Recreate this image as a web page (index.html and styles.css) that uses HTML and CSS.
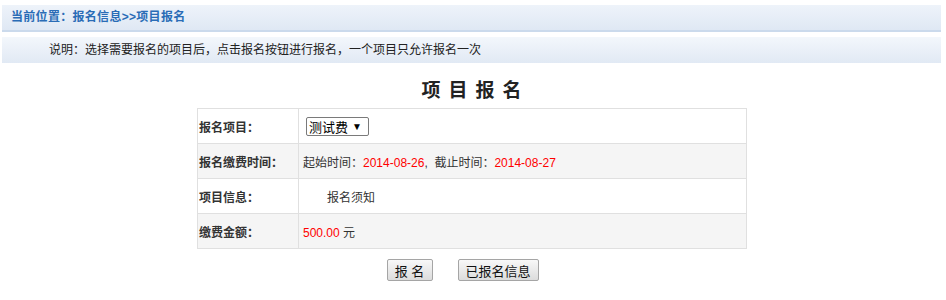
FILE: index.html
```html
<!DOCTYPE html>
<html>
<head>
    <meta charset="utf-8" />
    <title>项目报名</title>
    <link rel="stylesheet" href="styles.css">
</head>
<body>
    <div class="page">
        <div class="crumb">当前位置：报名信息&gt;&gt;项目报名</div>
        <div class="note">说明：选择需要报名的项目后，点击报名按钮进行报名，一个项目只允许报名一次</div>
        <h2 class="title">项目报名</h2>
        <table class="form-table">
            <tr>
                <th>报名项目：</th>
                <td class="pick">
                    <span class="select"><span>测试费</span><i>▼</i></span>
                </td>
            </tr>
            <tr class="alt">
                <th>报名缴费时间：</th>
                <td>起始时间：<span class="red">2014-08-26</span>,&nbsp;&nbsp;截止时间：<span class="red">2014-08-27</span></td>
            </tr>
            <tr>
                <th>项目信息：</th>
                <td class="indent">报名须知</td>
            </tr>
            <tr class="alt">
                <th>缴费金额：</th>
                <td><span class="red">500.00</span> 元</td>
            </tr>
        </table>
        <div class="actions">
            <button type="button" class="btn btn-short">报 名</button>
            <button type="button" class="btn btn-long">已报名信息</button>
        </div>
    </div>
</body>
</html>
```

FILE: styles.css
```css
body { margin: 0; font-family: "Liberation Sans", "Noto Sans CJK SC", sans-serif; font-size: 12px; color: #333; background: #fff; }
.page { padding: 5px 5px 0 2px; }
.crumb { height: 25px; line-height: 25px; padding-left: 9px; font-weight: bold; letter-spacing: 0.3px; color: #2a6cb6; background: linear-gradient(#eef3fa, #dfe8f4); border-bottom: 2px solid #cbdaec; }
.note { margin-top: 5px; height: 26px; line-height: 26px; padding-left: 47px; color: #222; background: linear-gradient(#f3f7fc, #e1e9f4); }
.title { margin: 11px 0 0; height: 34px; line-height: 34px; text-align: center; font-family: "Liberation Serif", "Noto Sans CJK SC", serif; font-size: 19px; font-weight: bold; letter-spacing: 8px; padding-left: 8px; color: #222; }
.form-table { width: 550px; margin: 0 auto 0 195px; border-collapse: collapse; }
.form-table th, .form-table td { height: 34px; padding: 0; border: 1px solid #e0e0e0; text-align: left; }
.form-table th { width: 99px; padding-left: 1px; font-weight: bold; color: #333; }
.form-table td { padding-left: 4px; color: #333; }
.form-table tr.alt th, .form-table tr.alt td { background: #f5f5f5; }
.form-table td.pick { padding-left: 7px; }
.form-table td.indent { padding-left: 28px; }
.red { color: #ff0000; }
.select { display: inline-flex; align-items: center; justify-content: space-between; box-sizing: border-box; width: 63px; height: 19px; padding: 0 6px 0 2px; border: 1px solid #7a7a7a; border-radius: 2px; font-size: 13px; white-space: nowrap; color: #000; background: #fff; vertical-align: middle; }
.select i { font-style: normal; font-size: 10px; }
.actions { display: flex; justify-content: center; gap: 25px; padding: 10px 18px 0 0; }
.btn { height: 22px; padding: 0; border: 1px solid #a5a5a5; border-radius: 2px; font-family: "Liberation Sans", "Noto Sans CJK SC", sans-serif; font-size: 13px; color: #111; background: linear-gradient(#f8f8f8, #dcdcdc); }
.btn-short { width: 46px; }
.btn-long { width: 81px; }
```
